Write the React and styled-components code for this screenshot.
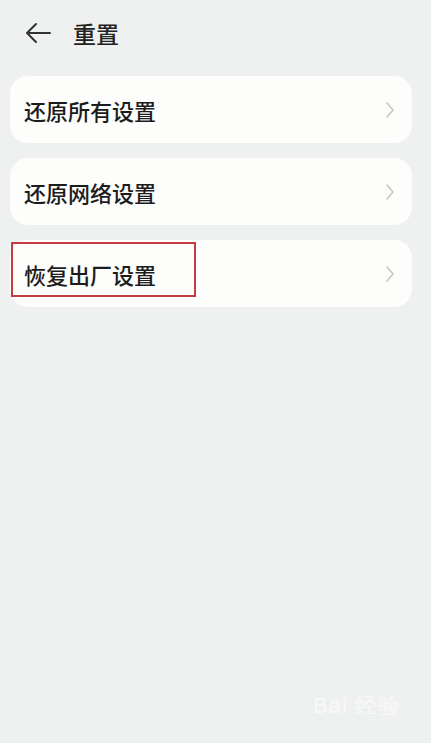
import styled, { createGlobalStyle } from 'styled-components';

const GlobalStyle = createGlobalStyle`
  html, body {
    margin: 0;
    padding: 0;
    background: #eff1f0;
    font-family: "Noto Sans CJK SC", "Noto Sans", sans-serif;
  }
`;

const Page = styled.div`
  width: 431px;
  height: 743px;
  background: #eff1f0;
  display: flex;
  flex-direction: column;
  position: relative;
  overflow: hidden;
`;

const Header = styled.div`
  height: 66px;
  display: flex;
  align-items: center;
  padding-left: 24px;
  gap: 21px;
`;

const Title = styled.div`
  font-size: 23px;
  font-weight: 500;
  color: #222;
  line-height: 1;
`;

const List = styled.div`
  display: flex;
  flex-direction: column;
  gap: 15px;
  padding: 10px 19px 0 10px;
`;

const Card = styled.div`
  height: 67px;
  background: #fdfdfb;
  border-radius: 18px;
  display: flex;
  align-items: center;
  justify-content: space-between;
  padding: 0 16px 0 14px;
  position: relative;
`;

const Label = styled.div`
  font-size: 22px;
  color: #1c1c1c;
  font-weight: 500;
`;

const Highlight = styled.div`
  position: absolute;
  left: 1px;
  top: 2px;
  width: 181px;
  height: 51px;
  border: 2px solid #c43b41;
`;

const Watermark = styled.div`
  position: absolute;
  right: 30px;
  bottom: 22px;
  font-size: 22px;
  color: #ffffff;
  opacity: 0.6;
  font-family: "Liberation Sans", sans-serif;
  letter-spacing: 1px;
`;

function Chevron() {
  return (
    <svg width="12" height="20" viewBox="0 0 12 20">
      <path d="M3 3 L9 10 L3 17" fill="none" stroke="#c5c7c6" strokeWidth="1.6" strokeLinecap="round" strokeLinejoin="round" />
    </svg>
  );
}

function BackArrow() {
  return (
    <svg width="28" height="24" viewBox="0 0 28 24">
      <path d="M26 12 H3 M12 3 L3 12 L12 21" fill="none" stroke="#333" strokeWidth="2" strokeLinecap="round" strokeLinejoin="round" />
    </svg>
  );
}

const items = [
  { label: '还原所有设置' },
  { label: '还原网络设置' },
  { label: '恢复出厂设置', marked: true },
];

export default function App() {
  return (
    <Page>
      <GlobalStyle />
      <Header>
        <BackArrow />
        <Title>重置</Title>
      </Header>
      <List>
        {items.map((item) => (
          <Card key={item.label}>
            <Label>{item.label}</Label>
            <Chevron />
            {item.marked && <Highlight />}
          </Card>
        ))}
      </List>
      <Watermark>Bai 经验</Watermark>
    </Page>
  );
}
